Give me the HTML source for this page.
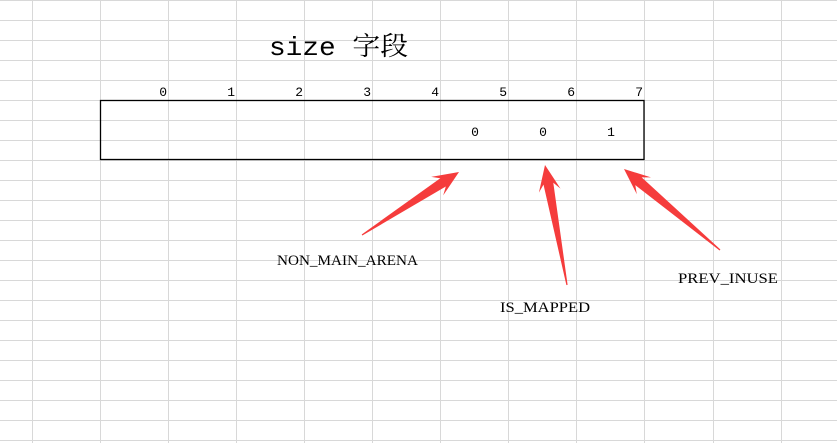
<!DOCTYPE html>
<html><head><meta charset="utf-8"><style>
html,body{margin:0;padding:0;background:#fff;width:837px;height:443px;overflow:hidden}
svg{display:block}
text{fill:#000}
.m{font-family:"Liberation Mono","Noto Serif CJK SC",monospace}
.s{font-family:"Liberation Serif",serif;font-size:15px}
</style></head><body>
<svg id="s" width="837" height="443" xmlns="http://www.w3.org/2000/svg">
<g id="grid" stroke="#d8d8d8" stroke-width="1"></g>
<rect x="100.5" y="100.5" width="543.5" height="59" fill="none" stroke="#000" stroke-width="1.3"/>
<text class="m" x="269" y="55" font-size="26" textLength="139" lengthAdjust="spacingAndGlyphs">size 字段</text>
<g font-size="13" text-anchor="end">
<text class="m" x="167" y="96">0</text><text class="m" x="235" y="96">1</text><text class="m" x="303" y="96">2</text><text class="m" x="371" y="96">3</text>
<text class="m" x="439" y="96">4</text><text class="m" x="507" y="96">5</text><text class="m" x="575" y="96">6</text><text class="m" x="643" y="96">7</text>
</g>
<g font-size="13" text-anchor="middle">
<text class="m" x="475" y="136">0</text><text class="m" x="543" y="136">0</text><text class="m" x="611" y="136">1</text>
</g>
<g id="arrows" fill="#f53c3c"></g>
<text class="s" x="277" y="265" textLength="141" lengthAdjust="spacingAndGlyphs">NON_MAIN_ARENA</text>
<text class="s" x="500" y="312" textLength="90" lengthAdjust="spacingAndGlyphs">IS_MAPPED</text>
<text class="s" x="678" y="283" textLength="100" lengthAdjust="spacingAndGlyphs">PREV_INUSE</text>
</svg>
<script>
var g=document.getElementById('grid'),h='';
for(var i=0;i<13;i++){var x=Math.round(32+i*68.05)+0.5;h+='<line x1="'+x+'" y1="0" x2="'+x+'" y2="443"/>';}
for(var y=0;y<=443;y+=20){h+='<line x1="0" y1="'+(y+0.5)+'" x2="837" y2="'+(y+0.5)+'"/>';}
g.innerHTML=h;
function arrow(tx,ty,hx,hy){var dx=hx-tx,dy=hy-ty,L=Math.hypot(dx,dy),ux=dx/L,uy=dy/L,px=-uy,py=ux;
var hl=26,hw=11,sw=5;var bx=hx-ux*hl,by=hy-uy*hl;var nx=hx-ux*(hl-7),ny=hy-uy*(hl-7);
var p=[[tx+px*0.6,ty+py*0.6],[nx+px*sw,ny+py*sw],[bx+px*hw,by+py*hw],[hx,hy],[bx-px*hw,by-py*hw],[nx-px*sw,ny-py*sw],[tx-px*0.6,ty-py*0.6]];
return '<polygon points="'+p.map(function(a){return a[0].toFixed(1)+','+a[1].toFixed(1)}).join(' ')+'"/>';}
document.getElementById('arrows').innerHTML=arrow(362,235,459,172)+arrow(567,285,545,165)+arrow(720,250,624,169);
</script>
</body></html>
